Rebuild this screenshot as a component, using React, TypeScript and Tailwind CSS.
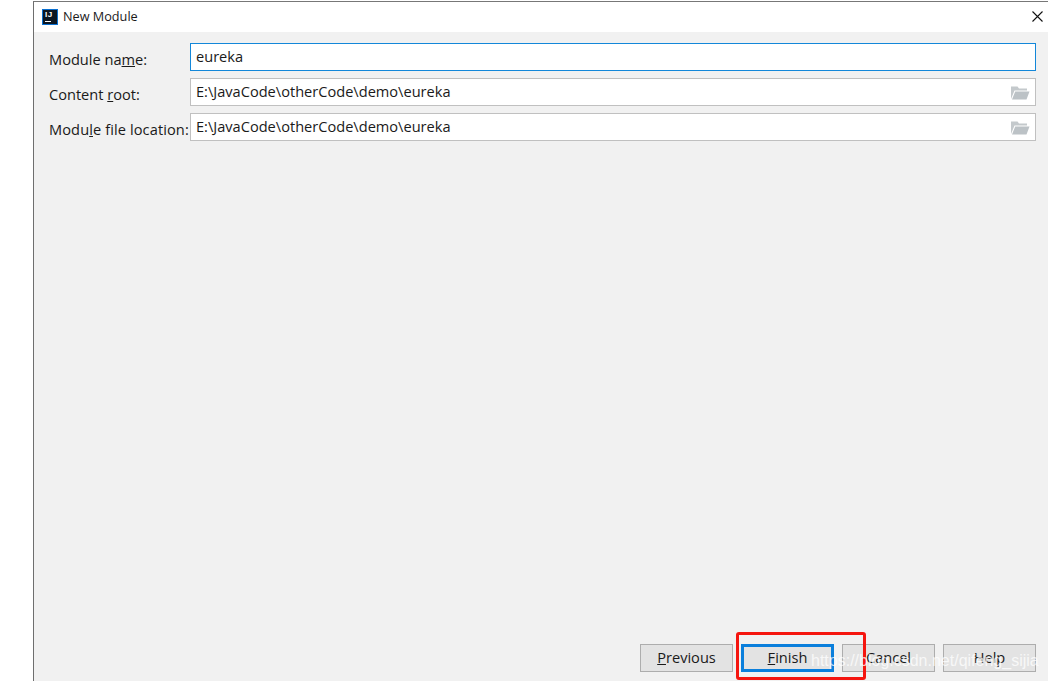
import React from "react";

function Folder() {
  return (
    <svg width="20" height="15" viewBox="0 0 20 15" className="absolute right-[5px] top-[6px]">
      <path d="M1 14 V1.5 H7.5 L9 3.5 H17 V5.5 H4.5 L1 14 Z" fill="#c4c9cc" />
      <path d="M2 14.5 L5.2 6.5 H19.5 L16.5 14.5 Z" fill="#bcc2c6" />
    </svg>
  );
}

function Field({ label, value, active }: { label: React.ReactNode; value: string; active?: boolean }) {
  return (
    <div className="flex items-center h-[28px]">
      <div className="w-[156px] shrink-0 pl-[15px] pt-[5px] text-[14.6px] text-[#1a1a1a] whitespace-nowrap">{label}</div>
      <div
        className={
          "relative w-[846px] h-[28px] bg-white border pl-[5px] text-[14.6px] leading-[25px] text-[#1a1a1a] " +
          (active ? "border-[#1387d9]" : "border-[#c0c0c0]")
        }
      >
        {value}
        {!active && <Folder />}
      </div>
    </div>
  );
}

function Btn({ children, focused }: { children: React.ReactNode; focused?: boolean }) {
  return (
    <div
      className={
        "h-[28px] w-[93px] flex items-center justify-center text-[14.6px] text-[#1a1a1a] bg-[#e3e3e3] " +
        (focused ? "border-[3px] border-[#0a7fdc]" : "border border-[#adadad]")
      }
    >
      {children}
    </div>
  );
}

export default function App() {
  return (
    <div
      className="relative w-[1048px] h-[681px] overflow-hidden bg-white flex"
      style={{ fontFamily: '"Open Sans", "Noto Sans", sans-serif' }}
    >
      <div className="w-[33px] shrink-0 bg-white" />
      <div className="flex-1 flex flex-col border-l border-l-[#6e6e6e] mt-[1px] border-t border-t-[#777777]">
        <div className="h-[30px] bg-white flex items-center pl-[8px] pr-[5px] shrink-0">
          <div className="w-[16px] h-[16px] bg-[#0b1622] border border-[#0a6fd0] flex flex-col items-start pl-[2px] pt-[1px]">
            <span
              className="text-[8px] leading-[8px] font-bold text-white tracking-[0.5px]"
              style={{ fontFamily: '"Liberation Sans", sans-serif' }}
            >
              IJ
            </span>
            <span className="w-[6px] h-[1px] bg-white mt-[2px]" />
          </div>
          <span className="ml-[5px] text-[12.7px] text-[#1a1a1a]">New Module</span>
          <svg width="11" height="11" viewBox="0 0 11 11" className="ml-auto mb-[2px]">
            <path d="M0.5 0.5 L10.5 10.5 M10.5 0.5 L0.5 10.5" stroke="#111" strokeWidth="1.1" fill="none" />
          </svg>
        </div>
        <div className="flex-1 bg-[#f1f1f1] flex flex-col pt-[11px]">
          <div className="flex flex-col gap-[7px]">
            <Field label={<>Module na<u>m</u>e:</>} value="eureka" active />
            <Field label={<>Content <u>r</u>oot:</>} value="E:\JavaCode\otherCode\demo\eureka" />
            <Field label={<span className="tracking-[0.1px]">Modu<u>l</u>e file location:</span>} value="E:\JavaCode\otherCode\demo\eureka" />
          </div>
          <div className="mt-auto flex justify-end gap-[8px] pr-[12px] pb-[9px]">
            <Btn><span><u>P</u>revious</span></Btn>
            <Btn focused><span><u>F</u>inish</span></Btn>
            <Btn>Cancel</Btn>
            <Btn>Help</Btn>
          </div>
        </div>
      </div>
      <div className="absolute left-[736px] top-[632px] w-[130px] h-[48px] border-[3px] border-[#f5150f] rounded-[3px]" />
      <div
        className="absolute left-[811px] top-[649px] text-[16px] text-white/75 whitespace-nowrap"
        style={{ fontFamily: '"Liberation Sans", sans-serif' }}
      >
        https://blog.csdn.net/qifeng_sijia
      </div>
    </div>
  );
}
